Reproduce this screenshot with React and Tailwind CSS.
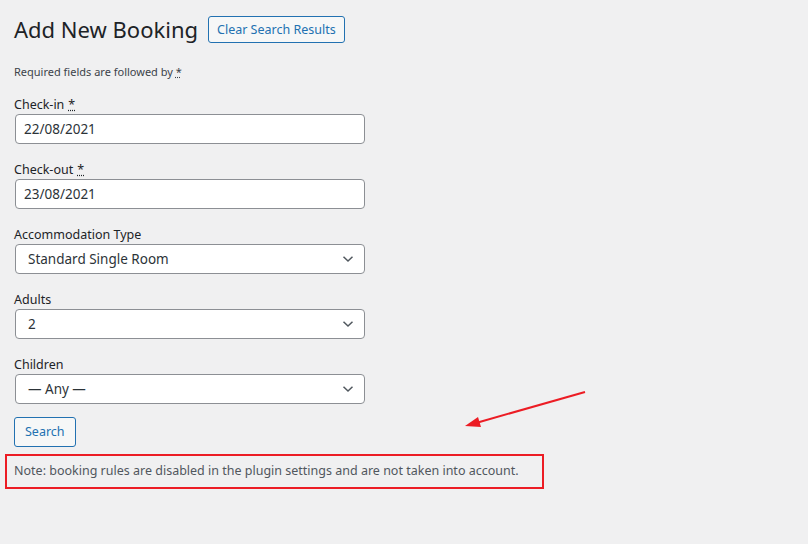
import React from 'react';

const Chevron = () => (
  <svg width="12" height="8" viewBox="0 0 12 8" className="absolute right-[10px] top-1/2 -translate-y-1/2" fill="none">
    <path d="M1.5 1.8 L6 6 L10.5 1.8" stroke="#50575e" strokeWidth="1.5" />
  </svg>
);

const Field = ({ label, required, children }) => (
  <div className="mb-[17px]">
    <div className="h-[18px] text-[12.5px] leading-[18px] text-[#1d2327]">
      {label}
      {required && <span className="ml-1 underline decoration-dotted">*</span>}
    </div>
    {children}
  </div>
);

const TextInput = ({ value }) => (
  <div className="ml-px flex h-[30px] w-[350px] items-center rounded-[4px] border border-[#8c8f94] bg-white pl-[8px] text-[13.5px] text-[#2c3338]">
    {value}
  </div>
);

const Select = ({ value }) => (
  <div className="relative ml-px flex h-[30px] w-[350px] items-center rounded-[4px] border border-[#8c8f94] bg-white pl-[12px] text-[13.5px] text-[#2c3338]">
    {value}
    <Chevron />
  </div>
);

const App = () => {
  return (
    <div className="relative min-h-[544px] bg-[#f0f0f1] px-[14px] pt-[15px]" style={{ fontFamily: '"Noto Sans", "Open Sans", sans-serif' }}>
      <div className="flex items-center">
        <h1 className="text-[22px] font-normal leading-[29px] text-[#1d2327]">Add New Booking</h1>
        <button className="ml-[10px] h-[27px] rounded-[3px] border border-[#2271b1] bg-[#f6f7f7] px-[8px] text-[12.5px] leading-[25px] text-[#2271b1]">
          Clear Search Results
        </button>
      </div>

      <p className="mt-[20px] h-[16px] text-[11px] leading-[16px] text-[#3c434a]">
        Required fields are followed by <span className="underline decoration-dotted">*</span>
      </p>

      <div className="mt-[16px]">
        <Field label="Check-in" required>
          <TextInput value="22/08/2021" />
        </Field>
        <Field label="Check-out" required>
          <TextInput value="23/08/2021" />
        </Field>
        <Field label="Accommodation Type">
          <Select value="Standard Single Room" />
        </Field>
        <Field label="Adults">
          <Select value="2" />
        </Field>
        <Field label="Children">
          <Select value="— Any —" />
        </Field>
      </div>

      <button className="-mt-[4px] block h-[30px] rounded-[3px] border border-[#2271b1] bg-[#f6f7f7] px-[10px] text-[12.5px] text-[#2271b1]">
        Search
      </button>

      <div className="-ml-[9px] mt-[7px] flex h-[35px] w-[539px] items-center border-2 border-[#ec1c24] pl-[7px] text-[12.5px] text-[#50575e]">
        Note: booking rules are disabled in the plugin settings and are not taken into account.
      </div>

      <svg className="absolute left-[460px] top-[386px]" width="130" height="46" viewBox="0 0 130 46" fill="none">
        <line x1="125" y1="6" x2="16" y2="37" stroke="#ec1c24" strokeWidth="2" />
        <polygon points="5,40 18,31 21,41" fill="#ec1c24" />
      </svg>
    </div>
  );
};

export default App;
